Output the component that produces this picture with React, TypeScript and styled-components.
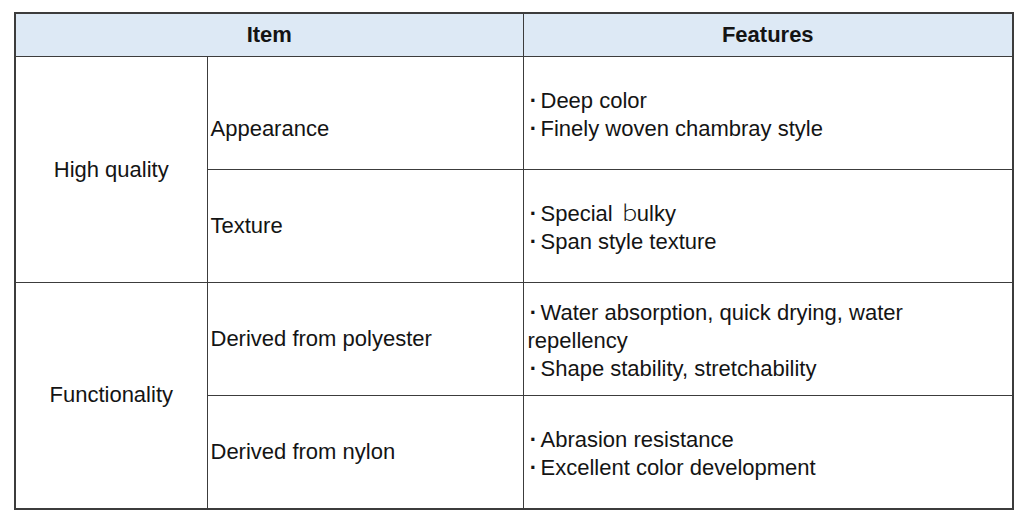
import styled, { createGlobalStyle } from "styled-components";

const GlobalStyle = createGlobalStyle`
  body {
    margin: 0;
    background: #ffffff;
    font-family: "Liberation Sans", Arial, "Noto Sans CJK JP", sans-serif;
    color: #141414;
  }
`;

type Row = {
  group?: string;
  item: string;
  features: string[];
  offset?: number;
};

const rows: Row[] = [
  {
    group: "High quality",
    item: "Appearance",
    features: ["Deep color", "Finely woven chambray style"],
    offset: 32,
  },
  { item: "Texture", features: ["Special ｂulky", "Span style texture"] },
  {
    group: "Functionality",
    item: "Derived from polyester",
    features: [
      "Water absorption, quick drying, water repellency",
      "Shape stability, stretchability",
    ],
  },
  {
    item: "Derived from nylon",
    features: ["Abrasion resistance", "Excellent color development"],
  },
];

export default function App() {
  return (
    <Page>
      <GlobalStyle />
      <Table>
        <colgroup>
          <col style={{ width: 192 }} />
          <col style={{ width: 316 }} />
          <col style={{ width: 490 }} />
        </colgroup>
        <thead>
          <tr>
            <HeadCell colSpan={2}>Item</HeadCell>
            <HeadCell>Features</HeadCell>
          </tr>
        </thead>
        <tbody>
          {rows.map((row) => (
            <BodyRow key={row.item}>
              {row.group && <GroupCell rowSpan={2}>{row.group}</GroupCell>}
              <ItemCell $offset={row.offset ?? 0}>{row.item}</ItemCell>
              <FeatureCell>
                {row.features.map((f) => (
                  <Feature key={f}>
                    <Dot>·</Dot>
                    {f.includes("ｂ") ? (
                      <>
                        Special <Wide>ｂ</Wide>ulky
                      </>
                    ) : (
                      f
                    )}
                  </Feature>
                ))}
              </FeatureCell>
            </BodyRow>
          ))}
        </tbody>
      </Table>
    </Page>
  );
}

const Page = styled.div`
  padding: 12px 14px;
`;

const Table = styled.table`
  width: 998px;
  border-collapse: collapse;
  table-layout: fixed;
  font-size: 22px;
  line-height: 28px;
  border: 2px solid #3c3c3c;
`;

const HeadCell = styled.th`
  height: 42px;
  padding: 0;
  background: #dde9f5;
  border: 1px solid #3c3c3c;
  font-weight: bold;
  text-align: center;
  vertical-align: middle;
`;

const BodyRow = styled.tr`
  height: 113px;
`;

const GroupCell = styled.td`
  border: 1px solid #3c3c3c;
  text-align: center;
  vertical-align: middle;
  padding: 0;
`;

const ItemCell = styled.td<{ $offset: number }>`
  border: 1px solid #3c3c3c;
  vertical-align: middle;
  padding: ${(p) => p.$offset}px 4px 0 3px;
`;

const FeatureCell = styled.td`
  border: 1px solid #3c3c3c;
  vertical-align: middle;
  padding: 4px 8px 0 4px;
`;

const Feature = styled.div`
  white-space: normal;
`;

const Dot = styled.span`
  display: inline-block;
  width: 12px;
  margin-right: 1px;
  text-align: center;
  font-weight: bold;
`;

const Wide = styled.span`
  font-family: "Noto Sans CJK JP", sans-serif;
  font-weight: 300;
  line-height: 0;
  letter-spacing: -4px;
`;
